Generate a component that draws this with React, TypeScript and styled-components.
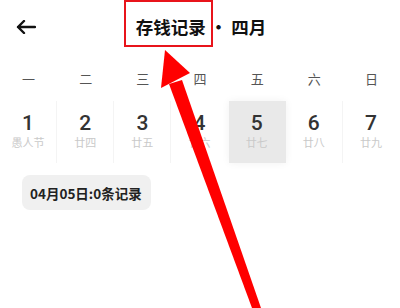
import styled, { createGlobalStyle } from "styled-components";

const GlobalStyle = createGlobalStyle`
  html, body {
    margin: 0;
    padding: 0;
    background: #fff;
  }
  body {
    font-family: "Noto Sans CJK SC", "Noto Sans", sans-serif;
  }
`;

const Page = styled.div`
  position: relative;
  width: 400px;
  height: 308px;
  overflow: hidden;
  background: #fff;
`;

const Header = styled.header`
  display: grid;
  grid-template-columns: 1fr auto 1fr;
  align-items: center;
  height: 54px;
  padding: 0 0 0 16px;
`;

const BackButton = styled.button`
  display: flex;
  align-items: center;
  justify-content: flex-start;
  width: 24px;
  height: 24px;
  padding: 0;
  border: none;
  background: none;
  color: #111;
`;

const Title = styled.h1`
  display: flex;
  align-items: center;
  margin: 0 0 0 -14px;
  font-size: 17.5px;
  font-weight: 700;
  color: #111;
  line-height: 1;
`;

const Dot = styled.span`
  margin: 0 4px;
  font-weight: 700;
`;

const Week = styled.div`
  display: grid;
  grid-template-columns: repeat(7, 1fr);
  height: 30px;
  margin-top: 9px;
  align-items: center;
`;

const WeekDay = styled.span`
  text-align: center;
  font-size: 13px;
  color: #555;
`;

const Days = styled.div`
  display: grid;
  grid-template-columns: repeat(7, 1fr);
  margin-top: 8px;
  height: 62px;
`;

const Day = styled.div<{ $active?: boolean; $last?: boolean }>`
  display: flex;
  flex-direction: column;
  align-items: center;
  padding-top: 10px;
  box-sizing: border-box;
  border-right: 1px solid ${(p) => (p.$last || p.$active ? "transparent" : "#f4f4f4")};
  background: ${(p) => (p.$active ? "#e9e9e9" : "transparent")};
  box-shadow: ${(p) => (p.$active ? "0 0 8px rgba(0, 0, 0, 0.06)" : "none")};
`;

const DayNum = styled.span`
  font-family: Roboto, "Noto Sans", sans-serif;
  font-size: 21px;
  font-weight: 500;
  line-height: 24px;
  color: #333;
`;

const Lunar = styled.span`
  font-size: 11px;
  line-height: 15px;
  color: #c9c9c9;
`;

const Badge = styled.div`
  display: inline-flex;
  align-items: center;
  height: 35px;
  margin: 12px 0 0 22px;
  padding: 0 9px 0 8px;
  border-radius: 8px;
  background: #f0f0f0;
  font-size: 13.5px;
  font-weight: 700;
  color: #222;
`;

const Overlay = styled.svg`
  position: absolute;
  inset: 0;
  pointer-events: none;
`;

const weekDays = ["一", "二", "三", "四", "五", "六", "日"];

const days = [
  { n: 1, lunar: "愚人节" },
  { n: 2, lunar: "廿四" },
  { n: 3, lunar: "廿五" },
  { n: 4, lunar: "廿六" },
  { n: 5, lunar: "廿七" },
  { n: 6, lunar: "廿八" },
  { n: 7, lunar: "廿九" },
];

export default function App() {
  return (
    <>
      <GlobalStyle />
      <Page>
        <Header>
          <BackButton aria-label="返回">
            <svg width="20" height="14" viewBox="0 0 20 14" fill="none">
              <path
                d="M19 7H2M8 1L2 7l6 6"
                stroke="currentColor"
                strokeWidth="2.4"
                strokeLinecap="round"
                strokeLinejoin="round"
              />
            </svg>
          </BackButton>
          <Title>
            存钱记录<Dot>·</Dot>四月
          </Title>
          <span />
        </Header>

        <Week>
          {weekDays.map((d) => (
            <WeekDay key={d}>{d}</WeekDay>
          ))}
        </Week>

        <Days>
          {days.map((d, i) => (
            <Day key={d.n} $active={d.n === 5} $last={i === days.length - 1 || i === 3}>
              <DayNum>{d.n}</DayNum>
              <Lunar>{d.lunar}</Lunar>
            </Day>
          ))}
        </Days>

        <Badge>04月05日:0条记录</Badge>

        <Overlay width="400" height="308" viewBox="0 0 400 308">
          <rect x="125" y="1" width="87" height="45" fill="none" stroke="#e8141b" strokeWidth="2" />
          <polygon points="169,84 182,80 261,308 252,308" fill="#ff0000" />
          <polygon points="165,50 190,73 161,88" fill="#ff0000" />
        </Overlay>
      </Page>
    </>
  );
}
